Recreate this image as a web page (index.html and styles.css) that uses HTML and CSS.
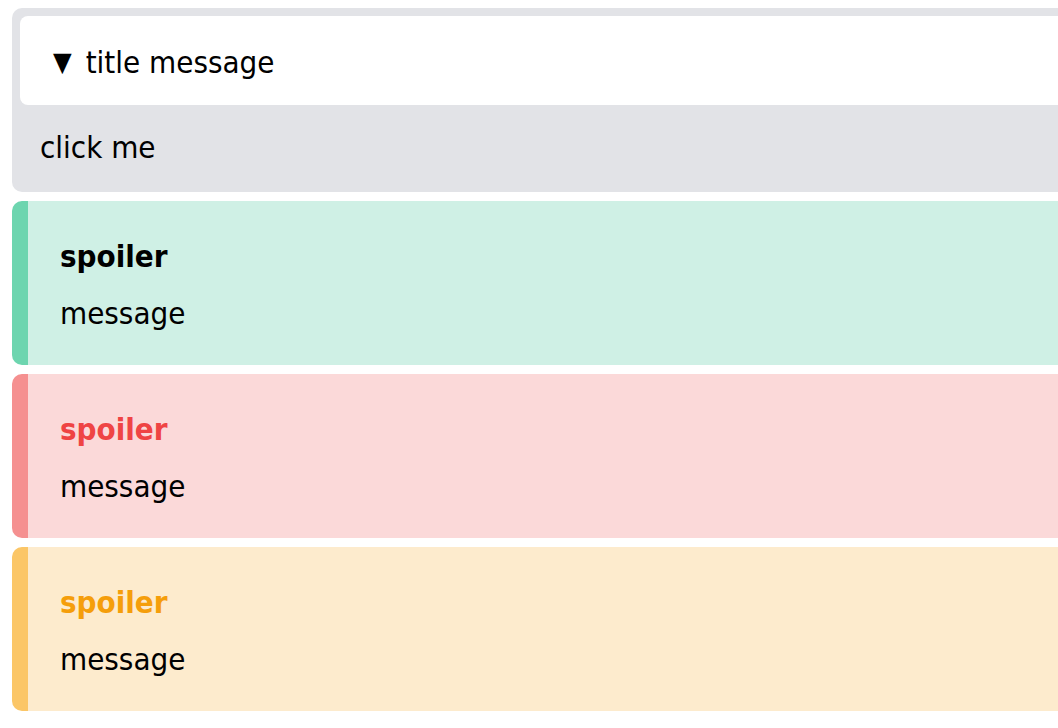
FILE: index.html
```html
<!DOCTYPE html>
<html lang="en">
<head>
<meta charset="utf-8">
<title>Spoilers</title>
<link rel="stylesheet" href="styles.css">
</head>
<body>
<main class="stack">
  <details class="disclosure" open>
    <summary class="disclosure-title"><span class="marker">▼</span>title message</summary>
    <div class="disclosure-body">click me</div>
  </details>
  <section class="spoiler spoiler-green">
    <div class="spoiler-title">spoiler</div>
    <div class="spoiler-text">message</div>
  </section>
  <section class="spoiler spoiler-red">
    <div class="spoiler-title">spoiler</div>
    <div class="spoiler-text">message</div>
  </section>
  <section class="spoiler spoiler-orange">
    <div class="spoiler-title">spoiler</div>
    <div class="spoiler-text">message</div>
  </section>
</main>
</body>
</html>
```
FILE: styles.css
```css
html, body {
  margin: 0;
  overflow: hidden;
  background: #ffffff;
}
body {
  font-family: "DejaVu Sans Condensed", "DejaVu Sans", sans-serif;
  font-size: 31px;
  color: #000;
  padding: 8px 0 0 12px;
}
.stack {
  display: flex;
  flex-direction: column;
  gap: 9px;
  width: 1100px;
}
.disclosure {
  background: #e2e3e7;
  border-radius: 10px;
  padding: 8px;
  height: 184px;
  box-sizing: border-box;
}
.disclosure-title {
  list-style: none;
  background: #ffffff;
  border-radius: 8px;
  height: 89px;
  box-sizing: border-box;
  display: flex;
  align-items: center;
  padding: 2px 0 0 33px;
  cursor: pointer;
}
.disclosure-title::-webkit-details-marker { display: none; }
.marker {
  font-size: 27px;
  margin-right: 14px;
}
.disclosure-body {
  padding: 5px 20px 0;
  height: 79px;
  box-sizing: border-box;
  display: flex;
  align-items: center;
}
.spoiler {
  height: 164px;
  box-sizing: border-box;
  border-radius: 10px;
  border-left: 16px solid;
  padding: 36px 32px 0;
  display: flex;
  flex-direction: column;
  gap: 18px;
}
.spoiler-title {
  font-weight: bold;
  line-height: 39px;
}
.spoiler-text {
  line-height: 39px;
}
.spoiler-green { background: #cff0e5; border-color: #6dd5af; }
.spoiler-red { background: #fbd9d9; border-color: #f59090; }
.spoiler-red .spoiler-title { color: #ef4444; }
.spoiler-orange { background: #fdebcd; border-color: #fbc667; }
.spoiler-orange .spoiler-title { color: #f59e0b; }
```
